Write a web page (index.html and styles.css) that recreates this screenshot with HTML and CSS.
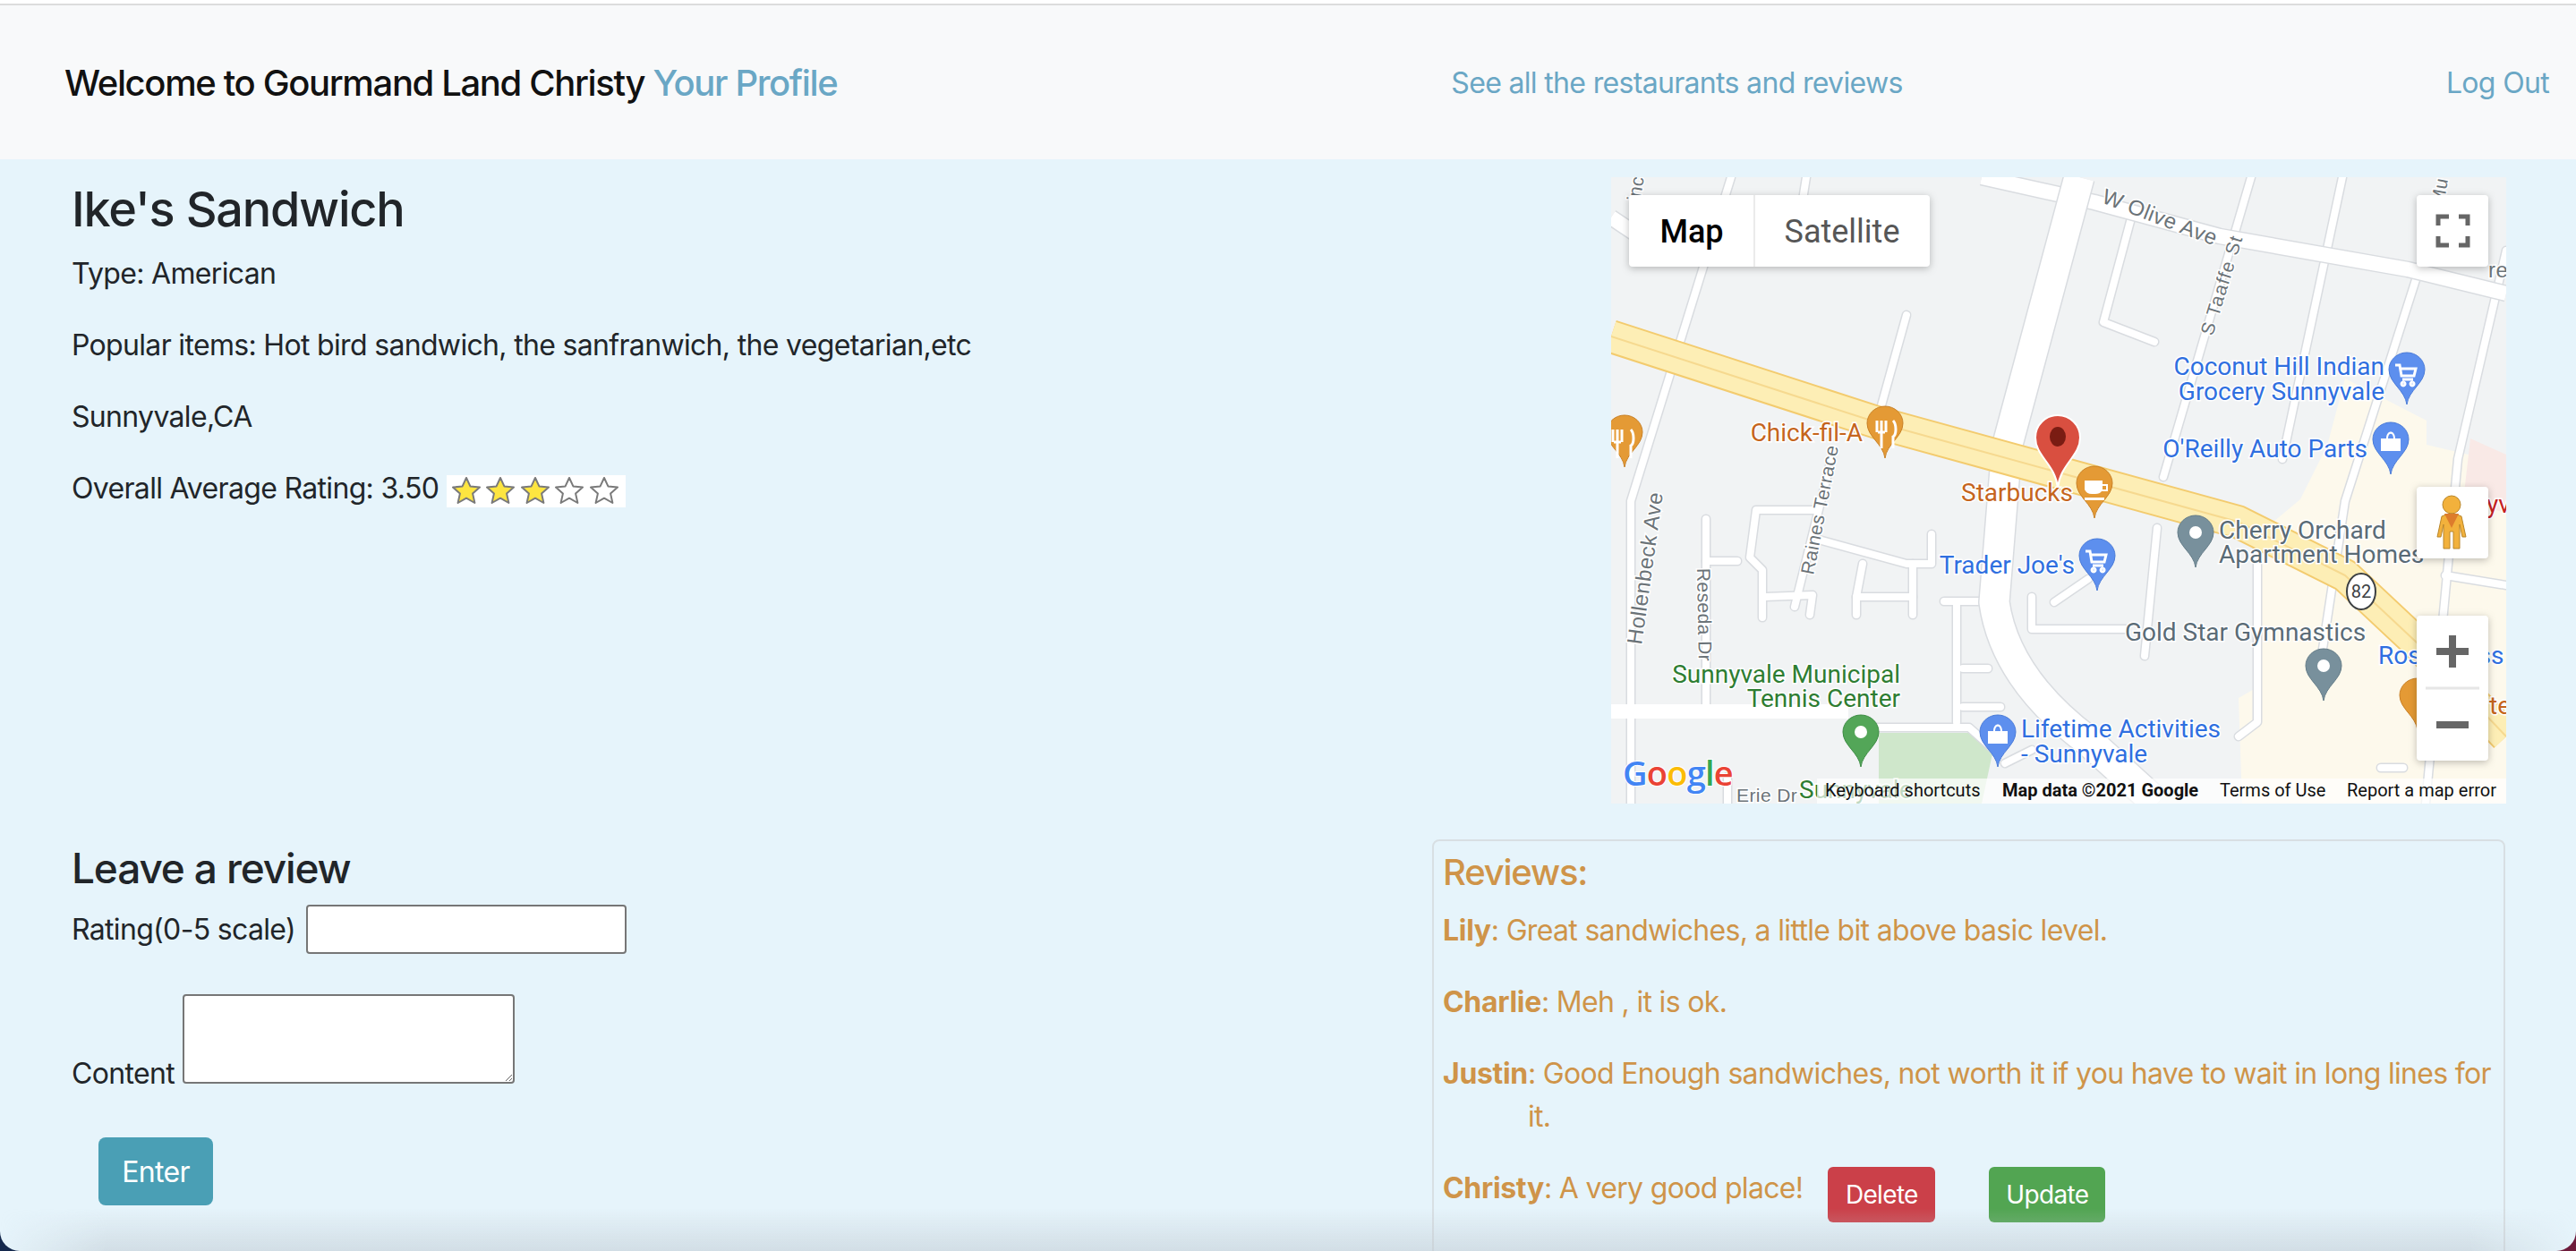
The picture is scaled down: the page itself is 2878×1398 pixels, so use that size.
FILE: index.html
```html
<!DOCTYPE html>
<html lang="en">
<head>
<meta charset="utf-8">
<title>Ike's Sandwich</title>
<link rel="stylesheet" href="styles.css">
</head>
<body>
<div class="window">
  <div class="topline"></div>
  <nav class="navbar">
    <div class="brand">Welcome to Gourmand Land Christy <a class="brand-link" href="#">Your Profile</a></div>
    <a class="nav-center" href="#">See all the restaurants and reviews</a>
    <a class="nav-right" href="#">Log Out</a>
  </nav>
  <main class="content">
    <section class="info">
      <h1 class="title">Ike's Sandwich</h1>
      <p class="line">Type: American</p>
      <p class="line">Popular items: Hot bird sandwich, the sanfranwich, the vegetarian,etc</p>
      <p class="line">Sunnyvale,CA</p>
      <p class="line">Overall Average Rating: 3.50
        <span class="stars">
          <svg class="star on" viewBox="0 0 32 32"><polygon points="16,1 20.4,10.4 31,11.6 23.1,18.6 25.4,29 16,23.7 6.6,29 8.9,18.6 1,11.6 11.6,10.4"/></svg>
          <svg class="star on" viewBox="0 0 32 32"><polygon points="16,1 20.4,10.4 31,11.6 23.1,18.6 25.4,29 16,23.7 6.6,29 8.9,18.6 1,11.6 11.6,10.4"/></svg>
          <svg class="star on" viewBox="0 0 32 32"><polygon points="16,1 20.4,10.4 31,11.6 23.1,18.6 25.4,29 16,23.7 6.6,29 8.9,18.6 1,11.6 11.6,10.4"/></svg>
          <svg class="star" viewBox="0 0 32 32"><polygon points="16,1 20.4,10.4 31,11.6 23.1,18.6 25.4,29 16,23.7 6.6,29 8.9,18.6 1,11.6 11.6,10.4"/></svg>
          <svg class="star" viewBox="0 0 32 32"><polygon points="16,1 20.4,10.4 31,11.6 23.1,18.6 25.4,29 16,23.7 6.6,29 8.9,18.6 1,11.6 11.6,10.4"/></svg>
        </span>
      </p>
    </section>

    <section class="map">
      <svg class="map-svg" viewBox="0 0 1000 700" width="1000" height="700">
        <defs>
          <path id="pin" d="M20 58C18 42 0 34 0 19A20 19 0 0 1 40 19C40 34 22 42 20 58Z"/>
          <g id="roads-minor">
            <path d="M134 0L22 362L22 700"/>
            <path d="M218 0L212 38"/>
            <path d="M715 0L617 335"/>
            <path d="M817 0L750 315"/>
            <path d="M904 99L820 362L790 560"/>
            <path d="M1000 82L946 315L910 700"/>
            <path d="M582 42L550 162L607 184"/>
            <path d="M330 154L302 255"/>
            <path d="M246 315L205 480"/>
            <path d="M106 382V592"/>
            <path d="M106 429H141"/>
            <path d="M228 372H162L155 425L169 439V492"/>
            <path d="M232 405L330 432H358V399"/>
            <path d="M281 432L274 469V489"/>
            <path d="M337 432V489"/>
            <path d="M172 469L225 467L222 489"/>
            <path d="M274 469H337"/>
            <path d="M372 474H414"/>
            <path d="M386 475V609"/>
            <path d="M393 549H421"/>
            <path d="M393 592H435"/>
            <path d="M470 469V505H575"/>
            <path d="M495 475L533 449"/>
            <path d="M610 392L596 535"/>
            <path d="M722 409V609L701 625"/>
            <path d="M932 445L1000 456"/>
            <path d="M860 660H885"/>
            <path d="M295 615H400L428 640"/>
            <path d="M440 655L470 640"/>
            <path d="M130 700V670"/>
          </g>
        </defs>
        <rect class="m-bg" width="1000" height="700"/>
        <polygon class="m-beige" points="820,225 911,272 911,299 1000,320 1000,700 705,700 701,582 722,570 722,400 770,360 800,300"/>
        <polygon class="m-pink" points="960,292 1000,310 1000,375 952,362"/>
        <polygon class="m-park" points="299,621 407,621 428,635 414,700 299,700"/>

        <use href="#roads-minor" class="road-case"/>
        <use href="#roads-minor" class="road-fill"/>
        <path class="road-case-major" d="M0 45L60 85M414 0L540 28L680 66L890 103L1000 130"/>
        <path class="road-fill-major" d="M0 45L60 85M414 0L540 28L680 66L890 103L1000 130"/>
        <path class="road-fill-major" d="M0 597H265"/>
        <path class="road-case-wide" d="M523 0L442 302L428 475Q440 560 533 630L610 700"/>
        <path class="road-fill-wide" d="M523 0L442 302L428 475Q440 560 533 630L610 700"/>

        <path class="fw-case" d="M0 178L300 275L700 385L820 445L900 520L1000 625"/>
        <path class="fw-fill" d="M0 178L300 275L700 385L820 445L900 520L1000 625"/>
        <path class="fw-line" d="M0 178L300 275L700 385L820 445L900 520L1000 625"/>

        <ellipse class="shield" cx="838" cy="463" rx="16" ry="20"/>
        <text class="shield-t" x="838" y="470">82</text>

        <text class="m-road" transform="translate(547 28) rotate(21)">W Olive Ave</text>
        <text class="m-road-s m-road-wide" transform="translate(672 178) rotate(-73)">S Taaffe St</text>
        <text class="m-road" transform="translate(34 523) rotate(-82)">Hollenbeck Ave</text>
        <text class="m-road-s" transform="translate(96 437) rotate(89)">Reseda Dr</text>
        <text class="m-road-s" transform="translate(226 445) rotate(-79)">Raines Terrace</text>
        <text class="m-road-s" transform="translate(32 28) rotate(-80)">inc</text>
        <text class="m-road-s" transform="translate(930 32) rotate(-80)">Mu</text>
        <text class="m-road" x="980" y="112">re</text>
        <text class="m-road-s" x="140" y="698">Erie Dr</text>

        <use href="#pin" class="pin-orange" x="-5" y="266"/>
        <path class="pin-ico" d="M2 282V296M7 282V296M12 282V296M7 296V314M3 296H11M22 282C26 286 26 298 22 300V314"/>
        <use href="#pin" class="pin-orange" x="286" y="256"/>
        <path class="pin-ico" d="M297 272V285M302 272V285M307 272V285M302 285V303M298 285H306M315 272C319 276 319 288 315 290V303"/>
        <use href="#pin" class="pin-orange" x="520" y="323"/>
        <path class="pin-cup" d="M529 339H549V343H555V351H548Q546 354 541 354H537Q531 354 529 349ZM549 345V349H553V345ZM529 358H551V361H529Z"/>
        <use href="#pin" class="pin-blue" x="869" y="196"/>
        <path class="pin-cart" d="M876 210H881L883 222H897L899 214H882M884 226H896M885 229A2 2 0 1 0 885.1 229M895 229A2 2 0 1 0 895.1 229"/>
        <use href="#pin" class="pin-blue" x="851" y="274"/>
        <path class="pin-bag" d="M860 292H882V306H860ZM866 292C866 282 876 282 876 292H874C874 285 868 285 868 292Z"/>
        <use href="#pin" class="pin-blue" x="523" y="404"/>
        <path class="pin-cart" d="M530 418H535L537 430H551L553 422H536M538 434H550M539 437A2 2 0 1 0 539.1 437M549 437A2 2 0 1 0 549.1 437"/>
        <use href="#pin" class="pin-grey" x="633" y="378"/>
        <circle class="pin-dot" cx="653" cy="397" r="7"/>
        <use href="#pin" class="pin-grey" x="776" y="527"/>
        <circle class="pin-dot" cx="796" cy="546" r="7"/>
        <use href="#pin" class="pin-green" x="259" y="601"/>
        <circle class="pin-dot" cx="279" cy="620" r="7"/>
        <use href="#pin" class="pin-blue" x="412" y="601"/>
        <path class="pin-bag" d="M421 619H443V633H421ZM427 619C427 609 437 609 437 619H435C435 612 429 612 429 619Z"/>
        <use href="#pin" class="pin-orange" x="881" y="560"/>

        <path class="marker" d="M499 347C496 320 474 312 474 291A25 25 0 0 1 524 291C524 312 502 320 499 347Z"/>
        <ellipse class="marker-dot" cx="499" cy="290" rx="9" ry="11"/>

        <text class="m-label blue end" x="864" y="221">Coconut Hill Indian</text>
        <text class="m-label blue end" x="864" y="249">Grocery Sunnyvale</text>
        <text class="m-label blue end" x="845" y="313">O'Reilly Auto Parts</text>
        <text class="m-label orange end" x="281" y="295">Chick-fil-A</text>
        <text class="m-label orange end" x="516" y="362">Starbucks</text>
        <text class="m-label blue end" x="518" y="443">Trader Joe's</text>
        <text class="m-label grey" x="679" y="404">Cherry Orchard</text>
        <text class="m-label grey" x="679" y="431">Apartment Homes</text>
        <text class="m-label grey" x="574" y="518">Gold Star Gymnastics</text>
        <text class="m-label green end" x="323" y="565">Sunnyvale Municipal</text>
        <text class="m-label green end" x="323" y="592">Tennis Center</text>
        <text class="m-label blue" x="458" y="626">Lifetime Activities</text>
        <text class="m-label blue" x="458" y="654">- Sunnyvale</text>
        <text class="m-label blue" x="857" y="544">Ross Dress</text>
        <text class="m-label orange" x="981" y="600">tea</text>
        <text class="m-label red" x="978" y="375">yv</text>
        <text class="m-label green" x="210" y="694">Sunnyvale</text>

        <text class="g-logo" x="13" y="680"><tspan class="g-b">G</tspan><tspan class="g-r">o</tspan><tspan class="g-y">o</tspan><tspan class="g-b">g</tspan><tspan class="g-g">l</tspan><tspan class="g-r">e</tspan></text>

        <rect class="attr-bar" x="230" y="672" width="770" height="28"/>
        <text class="attr" x="239" y="692">Keyboard shortcuts</text>
        <text class="attr attr-b" x="437" y="692">Map data ©2021 Google</text>
        <text class="attr" x="680" y="692">Terms of Use</text>
        <text class="attr" x="822" y="692">Report a map error</text>

        <rect class="ctl" x="20" y="20" width="336" height="80" rx="4"/>
        <path class="ctl-div" d="M160 20V100"/>
        <text class="ctl-map" x="90" y="73">Map</text>
        <text class="ctl-sat" x="258" y="73">Satellite</text>

        <rect class="ctl" x="900" y="20" width="80" height="80" rx="4"/>
        <path class="fs" d="M924 54V44H936M947 44H957V54M924 66V76H936M947 76H957V66"/>

        <rect class="ctl" x="900" y="346" width="80" height="80" rx="4"/>
        <circle class="peg" cx="939" cy="366" r="10"/>
        <path class="peg" d="M928 379Q939 373 950 379L955 402H951L948 388V415H941V396H937V415H930V388L927 402H923Z"/>
        <path class="peg-v" d="M931 376H947L939 392Z"/>

        <rect class="ctl" x="900" y="490" width="80" height="162" rx="4"/>
        <path class="zoom-div" d="M910 571H970"/>
        <path class="zoom-ico" d="M922 530H958M940 512V548"/>
        <path class="zoom-ico" d="M922 612H958"/>
      </svg>
    </section>

    <section class="form-col">
      <h2 class="form-title">Leave a review</h2>
      <form>
        <div class="field field-rating">
          <label for="rating">Rating(0-5 scale)</label>
          <input id="rating" class="rating-input" type="text">
        </div>
        <div class="field field-content">
          <label for="content">Content</label>
          <textarea id="content" class="content-input"></textarea>
        </div>
        <button class="btn btn-enter" type="button">Enter</button>
      </form>
    </section>

    <section class="reviews">
      <h2 class="reviews-title">Reviews:</h2>
      <div class="review"><strong>Lily</strong><span>: Great sandwiches, a little bit above basic level.</span></div>
      <div class="review"><strong>Charlie</strong><span>: Meh , it is ok.</span></div>
      <div class="review"><strong>Justin</strong><span>: Good Enough sandwiches, not worth it if you have to wait in long lines for it.</span></div>
      <div class="review review-own">
        <strong>Christy</strong><span>: A very good place!</span>
        <button class="btn btn-delete" type="button">Delete</button>
        <button class="btn btn-update" type="button">Update</button>
      </div>
    </section>
  </main>
  <div class="bottom-shade"></div>
</div>
</body>
</html>
```

FILE: styles.css
```css
* { box-sizing: border-box; }
html, body { margin: 0; height: 100%; }
body {
  background: linear-gradient(to right, #14284d 50%, #6e1c3c 50%);
  overflow: hidden;
  font-family: Inter, "Liberation Sans", sans-serif;
  font-size: 32px;
  line-height: 48px;
  letter-spacing: -0.021em;
  color: #212529;
}
.window {
  position: relative;
  height: 1398px;
  background: #e6f4fb;
  border-radius: 0 0 22px 22px;
  overflow: hidden;
}
.topline { height: 6px; background: #fff; border-bottom: 2px solid #dcdcdc; }
.navbar {
  height: 172px;
  background: #f8f9fa;
  display: flex;
  align-items: center;
  padding: 1px 30px 0 72px;
}
a { color: #6aa7c5; text-decoration: none; }
.brand { font-size: 40px; line-height: 60px; color: #111; font-weight: 500; letter-spacing: -0.034em; }
.brand-link { font-weight: 500; }
.nav-center { margin-left: 686px; }
.nav-right { margin-left: auto; }

.content {
  display: grid;
  grid-template-columns: 1600px 1199px;
  grid-template-rows: 760px auto;
}
.info { padding: 22px 0 0 80px; }
.title { margin: 0 0 15px; font-size: 54px; line-height: 67px; font-weight: 500; letter-spacing: -0.022em; }
.line { margin: 0 0 32px; }
.stars {
  display: inline-flex;
  gap: 6.5px;
  width: 200px;
  height: 36px;
  padding: 2px 0 0 6px;
  background: #fff;
  vertical-align: -8px;
}
.star { width: 32px; height: 32px; flex: none; }
.star polygon { fill: #fff; stroke: #7a7a7a; stroke-width: 2; stroke-linejoin: round; }
.star.on polygon { fill: #fde540; }

.map { padding: 20px 0 0 200px; margin-right: -1px; }
.map-svg { display: block; }
.m-bg { fill: #f1f3f4; }
.m-beige { fill: #fdf9ec; }
.m-pink { fill: #f9e9e6; }
.m-park { fill: #cfe7cb; }
.road-case { fill: none; stroke: #d9dce0; stroke-width: 11; stroke-linejoin: round; stroke-linecap: round; }
.road-fill { fill: none; stroke: #fff; stroke-width: 8; stroke-linejoin: round; stroke-linecap: round; }
.road-case-major { fill: none; stroke: #d9dce0; stroke-width: 19; stroke-linejoin: round; }
.road-fill-major { fill: none; stroke: #fff; stroke-width: 16; stroke-linejoin: round; }
.road-case-wide { fill: none; stroke: #d9dce0; stroke-width: 36; stroke-linejoin: round; }
.road-fill-wide { fill: none; stroke: #fff; stroke-width: 33; stroke-linejoin: round; }
.fw-case { fill: none; stroke: #f3cb6e; stroke-width: 38; stroke-linejoin: round; }
.fw-fill { fill: none; stroke: #fdeeb5; stroke-width: 34; stroke-linejoin: round; }
.fw-line { fill: none; stroke: #f6d98f; stroke-width: 2; stroke-linejoin: round; }
.shield { fill: #fff; stroke: #3c4043; stroke-width: 2; }
.shield-t { font: 400 20px Roboto, sans-serif; letter-spacing: 0; text-anchor: middle; fill: #3c4043; }
.m-road, .m-road-s {
  font-family: "Liberation Sans", sans-serif;
  letter-spacing: 0.02em;
  fill: #6b7378;
  stroke: #fff;
  stroke-width: 3px;
  paint-order: stroke;
}
.m-road { font-size: 24px; }
.m-road-s { font-size: 21px; }
.m-road-wide { letter-spacing: 0.06em; }
.m-label {
  font-family: Roboto, sans-serif;
  font-size: 28px;
  letter-spacing: 0;
  stroke: #fff;
  stroke-width: 3px;
  paint-order: stroke;
}
.end { text-anchor: end; }
.blue { fill: #2f6fe0; }
.orange { fill: #c5651d; }
.grey { fill: #5a6b76; }
.green { fill: #2e7d32; }
.red { fill: #c5221f; }
.pin-orange { fill: #e49a35; stroke: #c98025; stroke-width: 1; }
.pin-blue { fill: #5d8fee; stroke: #4a7bd8; stroke-width: 1; }
.pin-grey { fill: #78909c; stroke: #647c88; stroke-width: 1; }
.pin-green { fill: #53a658; stroke: #3d8c44; stroke-width: 1; }
.pin-dot { fill: #fff; }
.pin-ico { fill: none; stroke: #fff; stroke-width: 3; }
.pin-cup { fill: #fff; fill-rule: evenodd; }
.pin-cart { fill: none; stroke: #fff; stroke-width: 3; }
.pin-bag { fill: #fff; }
.marker { fill: #d94f40; stroke: #fff; stroke-width: 2; }
.marker-dot { fill: #7a1c13; }
.g-logo { font-family: "Open Sans", sans-serif; font-size: 38px; font-weight: 600; letter-spacing: -0.02em; stroke: #fff; stroke-width: 2px; paint-order: stroke; }
.g-b { fill: #4285f4; }
.g-r { fill: #ea4335; }
.g-y { fill: #fbbc05; }
.g-g { fill: #34a853; }
.attr-bar { fill: #fff; fill-opacity: 0.7; }
.attr { font-family: Roboto, sans-serif; font-size: 20px; letter-spacing: 0; fill: #111; }
.attr-b { font-weight: 700; }
.ctl { fill: #fff; filter: drop-shadow(0 2px 4px rgba(0, 0, 0, 0.25)); }
.ctl-div { stroke: #ebebeb; stroke-width: 2; }
.ctl-map, .ctl-sat { font-family: Roboto, sans-serif; font-size: 36px; letter-spacing: 0; text-anchor: middle; }
.ctl-map { font-weight: 500; fill: #000; }
.ctl-sat { fill: #565656; }
.fs { fill: none; stroke: #666; stroke-width: 5; }
.peg { fill: #f2b13c; stroke: #b9862a; stroke-width: 1; }
.peg-v { fill: #dd7c2c; }
.zoom-div { stroke: #e6e6e6; stroke-width: 3; }
.zoom-ico { fill: none; stroke: #666; stroke-width: 8; }

.form-col { padding: 3px 0 0 80px; }
.form-title { margin: 0 0 12px; font-size: 46px; line-height: 58px; font-weight: 500; letter-spacing: -0.025em; }
.field-rating { display: flex; align-items: center; gap: 12.5px; margin-bottom: 45px; }
.field-content { margin-bottom: 47px; }
.rating-input {
  width: 358px;
  height: 55px;
  border: 2px solid #767676;
  border-radius: 4px;
  background: #fff;
}
.content-input {
  width: 371px;
  height: 100px;
  margin-left: 1px;
  border: 2px solid #767676;
  border-radius: 4px;
  background: #fff;
}
.btn {
  border: 0;
  font-family: inherit;
  letter-spacing: inherit;
  color: #fff;
}
.btn-enter {
  display: block;
  margin-left: 30px;
  width: 128px;
  height: 76px;
  border-radius: 8px;
  font-size: 32px;
  background: #4a9fb5;
}

.reviews {
  height: 600px;
  border: 2px solid #d8dfe3;
  border-radius: 8px;
  padding: 11px 10px;
  color: #cf9449;
}
.reviews-title { margin: 0 0 17px; font-size: 40px; line-height: 48px; font-weight: 500; letter-spacing: -0.03em; }
.review { display: flex; margin-bottom: 32px; }
.review strong { font-weight: 700; flex: none; letter-spacing: -0.01em; }
.review-own { align-items: flex-start; }
.btn-delete, .btn-update {
  height: 62px;
  border-radius: 6px;
  font-size: 28px;
}
.btn-delete { width: 120px; margin-left: 28px; background: #cb4049; }
.btn-update { width: 130px; margin-left: 60px; background: #52a552; }

.bottom-shade {
  position: absolute;
  left: 0;
  right: 0;
  bottom: 0;
  height: 48px;
  background: linear-gradient(to bottom, rgba(190, 200, 208, 0), rgba(190, 200, 208, 0.5));
  -webkit-mask-image: linear-gradient(to right, transparent, #000 120px, #000 calc(100% - 120px), transparent);
  mask-image: linear-gradient(to right, transparent, #000 120px, #000 calc(100% - 120px), transparent);
  pointer-events: none;
}
```
